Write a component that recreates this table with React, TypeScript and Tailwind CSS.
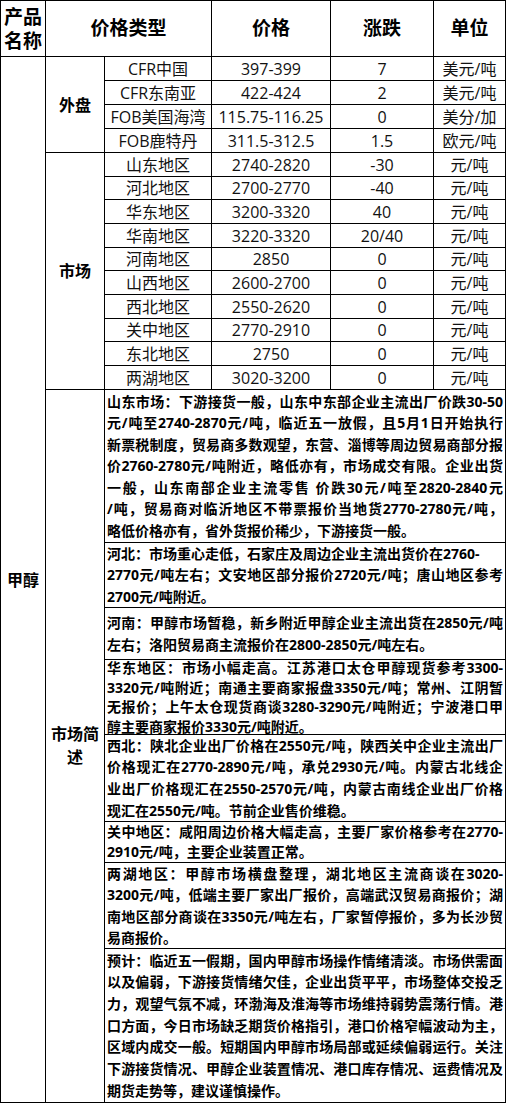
import React from "react";

const FONT = "font-['Open_Sans','Noto_Sans_CJK_SC',sans-serif]";

const waipan: string[][] = [
  ["CFR中国", "397-399", "7", "美元/吨"],
  ["CFR东南亚", "422-424", "2", "美元/吨"],
  ["FOB美国海湾", "115.75-116.25", "0", "美分/加"],
  ["FOB鹿特丹", "311.5-312.5", "1.5", "欧元/吨"],
];

const shichang: string[][] = [
  ["山东地区", "2740-2820", "-30"],
  ["河北地区", "2700-2770", "-40"],
  ["华东地区", "3200-3320", "40"],
  ["华南地区", "3220-3320", "20/40"],
  ["河南地区", "2850", "0"],
  ["山西地区", "2600-2700", "0"],
  ["西北地区", "2550-2620", "0"],
  ["关中地区", "2770-2910", "0"],
  ["东北地区", "2750", "0"],
  ["两湖地区", "3020-3200", "0"],
];

type Block = { lines: string[]; lh: string; noJust?: number[] };

const blocks: Block[] = [
  {
    lh: "leading-[21.4px]",
    lines: [
      "山东市场：下游接货一般，山东中东部企业主流出厂价跌30-50",
      "元/吨至2740-2870元/吨，临近五一放假，且5月1日开始执行",
      "新票税制度，贸易商多数观望，东营、淄博等周边贸易商部分报",
      "价2760-2780元/吨附近，略低亦有，市场成交有限。企业出货",
      "一般，山东南部企业主流零售 价跌30元/吨至2820-2840元",
      "/吨，贸易商对临沂地区不带票报价当地货2770-2780元/吨，",
      "略低价格亦有，省外货报价稀少，下游接货一般。",
    ],
  },
  {
    lh: "leading-[21.5px]",
    noJust: [0],
    lines: [
      "河北：市场重心走低，石家庄及周边企业主流出货价在2760-",
      "2770元/吨左右；文安地区部分报价2720元/吨；唐山地区参考",
      "2700元/吨附近。",
    ],
  },
  {
    lh: "leading-[22px]",
    lines: [
      "河南：甲醇市场暂稳，新乡附近甲醇企业主流出货在2850元/吨",
      "左右；洛阳贸易商主流报价在2800-2850元/吨左右。",
    ],
  },
  {
    lh: "leading-[19.5px]",
    lines: [
      "华东地区：市场小幅走高。江苏港口太仓甲醇现货参考3300-",
      "3320元/吨附近；南通主要商家报盘3350元/吨；常州、江阴暂",
      "无报价；上午太仓现货商谈3280-3290元/吨附近；宁波港口甲",
      "醇主要商家报价3330元/吨附近。",
    ],
  },
  {
    lh: "leading-[21.6px]",
    lines: [
      "西北：陕北企业出厂价格在2550元/吨，陕西关中企业主流出厂",
      "价格现汇在2770-2890元/吨，承兑2930元/吨。内蒙古北线企",
      "业出厂价格现汇在2550-2570元/吨，内蒙古南线企业出厂价格",
      "现汇在2550元/吨。节前企业售价维稳。",
    ],
  },
  {
    lh: "leading-[20px]",
    lines: [
      "关中地区：咸阳周边价格大幅走高，主要厂家价格参考在2770-",
      "2910元/吨，主要企业装置正常。",
    ],
  },
  {
    lh: "leading-[21.2px]",
    lines: [
      "两湖地区：甲醇市场横盘整理，湖北地区主流商谈在3020-",
      "3200元/吨，低端主要厂家出厂报价，高端武汉贸易商报价；湖",
      "南地区部分商谈在3350元/吨左右，厂家暂停报价，多为长沙贸",
      "易商报价。",
    ],
  },
  {
    lh: "leading-[21.7px]",
    lines: [
      "预计：临近五一假期，国内甲醇市场操作情绪清淡。市场供需面",
      "以及偏弱，下游接货情绪欠佳，企业出货平平，市场整体交投乏",
      "力，观望气氛不减，环渤海及淮海等市场维持弱势震荡行情。港",
      "口方面，今日市场缺乏期货价格指引，港口价格窄幅波动为主，",
      "区域内成交一般。短期国内甲醇市场局部或延续偏弱运行。关注",
      "下游接货情况、甲醇企业装置情况、港口库存情况、运费情况及",
      "期货走势等，建议谨慎操作。",
    ],
  },
];

const cell = "border-r border-b border-black flex items-center justify-center";
const bodyText = "text-[16px] text-[#111] whitespace-nowrap";

export default function App() {
  return (
    <div className={`w-[506px] bg-white ${FONT}`}>
      <div className="grid grid-cols-[45px_59px_107px_119px_103px_72px] grid-rows-[56px_24px_24px_24px_24px_24px_23px_24px_24px_23px_24px_24px_23px_24px_24px_153px_65px_52px_75px_87px_41px_86px_154px] border-l border-t border-black">
        {/* header */}
        <div className={`${cell} flex-col text-[19px] font-bold leading-[24px] text-black`}>
          <span>产品</span>
          <span>名称</span>
        </div>
        <div className={`${cell} [grid-column:span_2] text-[19px] font-bold text-black`}>价格类型</div>
        <div className={`${cell} text-[19px] font-bold text-black`}>价格</div>
        <div className={`${cell} text-[19px] font-bold text-black`}>涨跌</div>
        <div className={`${cell} text-[19px] font-bold text-black`}>单位</div>

        {/* product */}
        <div className={`${cell} [grid-row:span_22] text-[16px] font-bold text-black`}>甲醇</div>

        {/* 外盘 */}
        <div className={`${cell} [grid-row:span_4] text-[16px] font-bold text-black`}>外盘</div>
        {waipan.map((r) => (
          <React.Fragment key={r[0]}>
            <div className={`${cell} ${bodyText}`}>{r[0]}</div>
            <div className={`${cell} ${bodyText}`}>{r[1]}</div>
            <div className={`${cell} ${bodyText}`}>{r[2]}</div>
            <div className={`${cell} ${bodyText}`}>{r[3]}</div>
          </React.Fragment>
        ))}

        {/* 市场 */}
        <div className={`${cell} [grid-row:span_10] text-[16px] font-bold text-black`}>市场</div>
        {shichang.map((r) => (
          <React.Fragment key={r[0]}>
            <div className={`${cell} ${bodyText}`}>{r[0]}</div>
            <div className={`${cell} ${bodyText}`}>{r[1]}</div>
            <div className={`${cell} ${bodyText}`}>{r[2]}</div>
            <div className={`${cell} ${bodyText}`}>元/吨</div>
          </React.Fragment>
        ))}

        {/* 市场简述 */}
        <div className={`${cell} [grid-row:span_8] flex-col text-[16px] font-bold leading-[23px] text-black`}>
          <span>市场简</span>
          <span>述</span>
        </div>
        {blocks.map((b, bi) => (
          <div
            key={bi}
            className="[grid-column:span_4] border-r border-b border-black flex flex-col justify-center px-[2px] text-[14px] font-bold text-black"
          >
            {b.lines.map((ln, i) => {
              const last = i === b.lines.length - 1;
              const nj = b.noJust?.includes(i);
              return (
                <div
                  key={i}
                  className={`${b.lh} ${last || nj ? "text-left" : "text-justify [text-align-last:justify]"}`}
                >
                  {ln}
                </div>
              );
            })}
          </div>
        ))}
      </div>
    </div>
  );
}
